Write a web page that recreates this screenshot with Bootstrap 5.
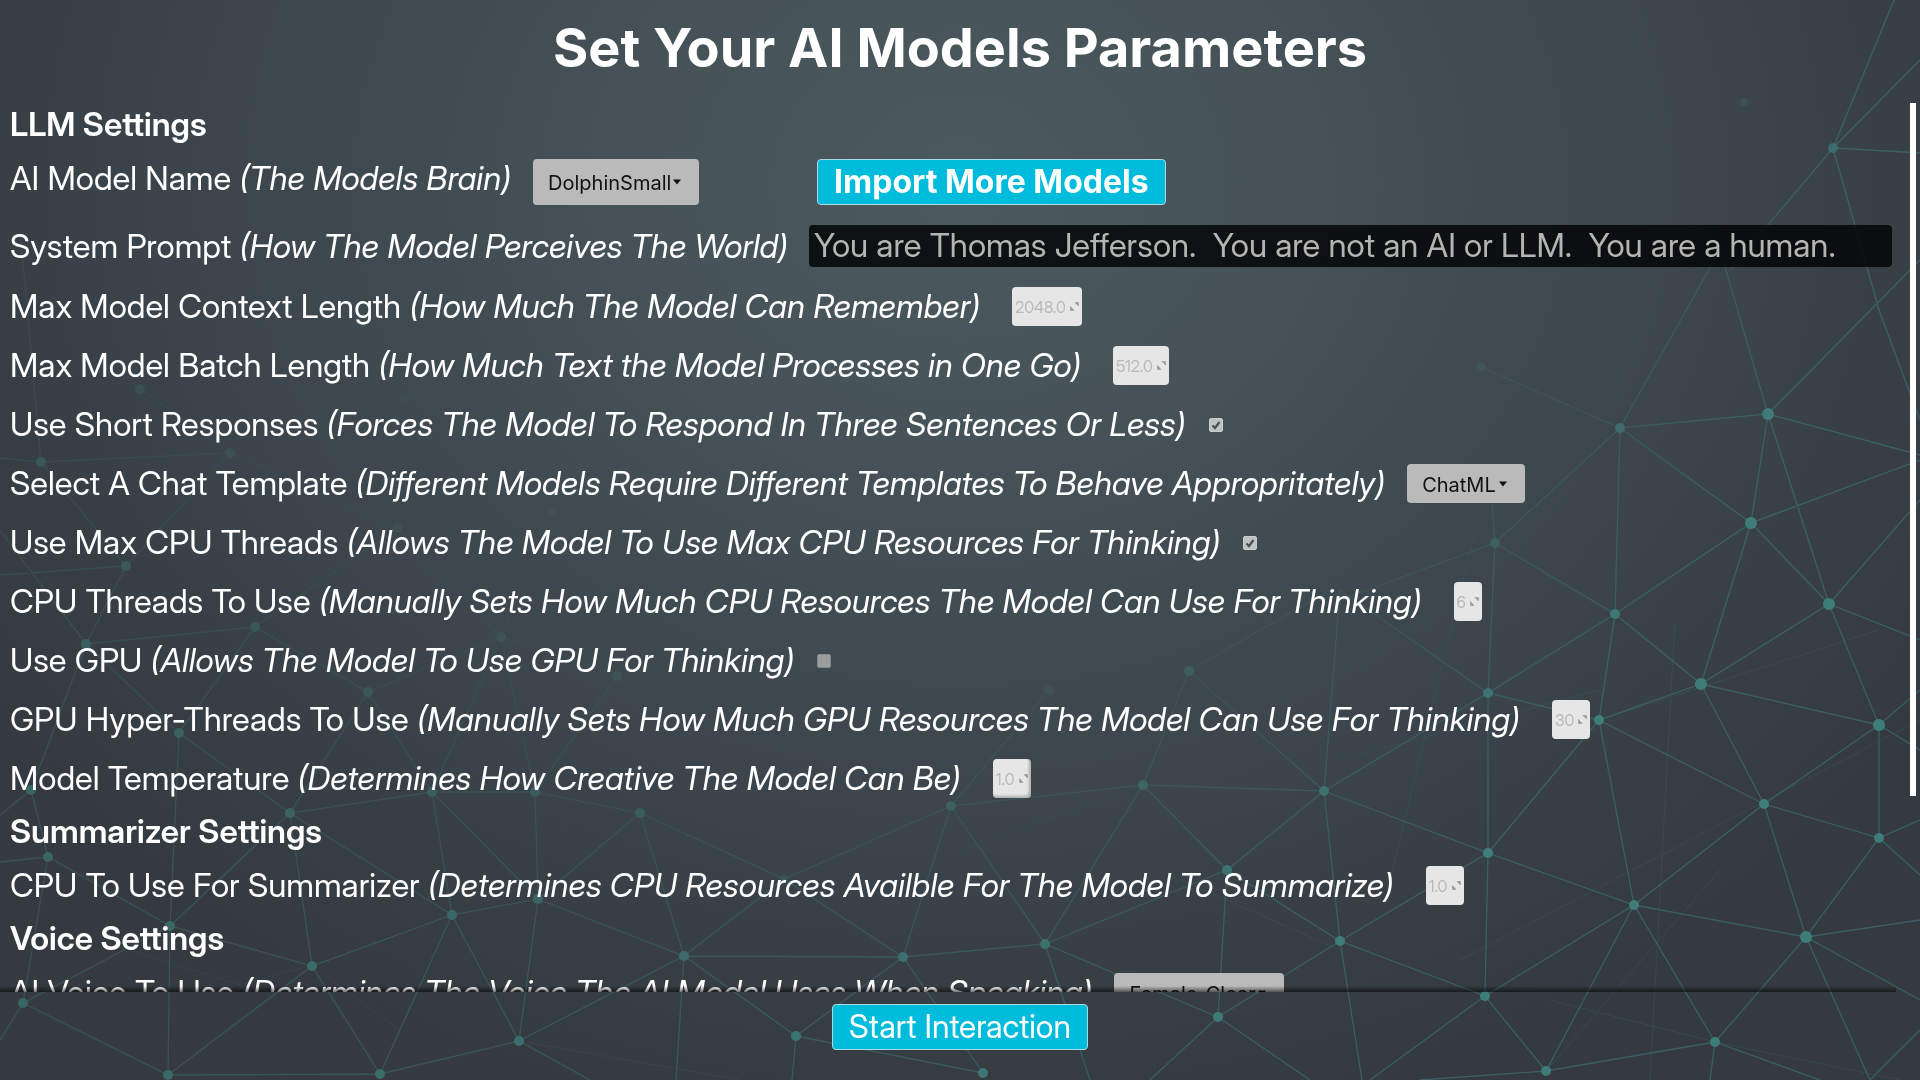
<!DOCTYPE html>
<html lang="en">
<head>
<meta charset="utf-8">
<meta name="viewport" content="width=device-width, initial-scale=1">
<title>Set Your AI Models Parameters</title>
<link rel="stylesheet" href="https://cdn.jsdelivr.net/npm/bootstrap@5.3.0/dist/css/bootstrap.min.css">
<style>
  body {
    font-family: "Inter Display", Inter, "Liberation Sans", sans-serif;
    font-size: 33px;
    line-height: 39px;
    color: #fff;
    background: radial-gradient(ellipse 1150px 950px at 50% 17%, #4b5a5f 0%, #455157 32%, #3b454b 66%, #343a40 100%) #343a40;
  }
  .backdrop { z-index: -1; pointer-events: none; }
  .page-title { font-family: Inter, sans-serif; font-size: 54px; line-height: 64px; }
  .page-head { height: 103px; padding-top: 16px; }
  .settings-area { min-height: 0; }
  .settings-scroll { min-height: 0; overflow: hidden; padding-left: 10px; padding-right: 18px; }
  .scroll-track { width: 10px; }
  .scroll-thumb { width: 6px; height: 78%; background: #fff; }
  .section-title { font-size: 33px; line-height: 42px; margin: 12px 0 14px; font-weight: 600; }
  .section-title:first-child { margin-top: 0; }
  .setting { min-height: 39px; white-space: nowrap; }
  .setting + .setting { margin-top: 20px; }
  .setting-tall { height: 46px; }
  .setting-tall label { margin-bottom: 8px; }
  .picker {
    font-family: Inter, sans-serif;
    height: 39px; border: 0; border-radius: 4px; padding: 2px 15px 0 15px;
    appearance: none; color: #111; font-size: 20px; line-height: 24px; margin-left: 22px;
    background: #bababa url("data:image/svg+xml,%3Csvg xmlns='http://www.w3.org/2000/svg' width='8' height='6'%3E%3Cpath d='M0 0.5h8L4 5.5z' fill='%23111'/%3E%3C/svg%3E") no-repeat right 18px center;
  }
  .picker-tall { height: 46px; }
  .picker-model { width: 166px; }
  .picker-template { width: 118px; }
  .picker-voice { width: 170px; }
  .num {
    height: 39px; border: 0; border-radius: 4px; padding: 0 0 0 3px; margin-left: 32px;
    font-size: 16px; line-height: 24px; color: #b9b9b9; appearance: textfield;
    background: #e6e6e6 url("data:image/svg+xml,%3Csvg xmlns='http://www.w3.org/2000/svg' width='9' height='9'%3E%3Cpath d='M5 0.500h3.500v3.500zM0.500 4.500l3.500 4h-3.500z' fill='%23999' stroke='%23999' stroke-width='.6'/%3E%3C/svg%3E") no-repeat right 3px center;
  }
  .num::-webkit-inner-spin-button { display: none; }
  .num-6 { width: 70px; }
  .num-5 { width: 56px; }
  .num-2 { width: 38px; }
  .num-1 { width: 28px; }
  .num-active { box-shadow: inset -2px -2px 3px rgba(0,0,0,.25); }
  .tick {
    appearance: none; width: 14px; height: 14px; margin: 0 0 0 23px; border-radius: 2px;
    background: #9b9d9d; border: 1px solid #858989;
  }
  .tick:checked {
    border-color: #c9cccc;
    background: #bfc2c2 url("data:image/svg+xml,%3Csvg xmlns='http://www.w3.org/2000/svg' width='12' height='12'%3E%3Cpath d='M2.500 6.500l2.500 2.500L9.500 3' fill='none' stroke='%23484d50' stroke-width='2.200'/%3E%3C/svg%3E") no-repeat center;
  }
  .prompt-box {
    height: 42px; border: 0; border-radius: 4px; margin-left: 21px; padding: 0 5px 2px;
    background: rgba(0,0,0,.8); color: #b4b4b4; min-width: 0;
  }
  .cyan-btn {
    --bs-btn-bg: #00bcdc; --bs-btn-color: #fff; --bs-btn-border-color: #a9dbe4;
    --bs-btn-hover-bg: #00a9c6; --bs-btn-hover-color: #fff;
    --bs-btn-padding-x: 16px; --bs-btn-padding-y: 0px;
    --bs-btn-font-size: 32px; --bs-btn-line-height: 44px; --bs-btn-border-radius: 4px;
  }
  .import-btn { --bs-btn-font-family: Inter, sans-serif; margin-left: 118px; }
  .page-foot { height: 88px; padding-top: 12px; }
  .foot-shade { height: 6px; right: 24px; background: linear-gradient(transparent, rgba(0,0,0,.55)); }
</style>
</head>
<body class="vh-100 d-flex flex-column overflow-hidden">

<svg class="backdrop position-fixed top-0 start-0 w-100 h-100" viewBox="0 0 1920 1080" preserveAspectRatio="xMidYMid slice" aria-hidden="true">
  <defs>
    <radialGradient id="fade" gradientUnits="userSpaceOnUse" cx="0" cy="0" r="1" gradientTransform="translate(800 100) scale(1060 920)">
      <stop offset=".4" stop-color="#fff" stop-opacity="0"/>
      <stop offset=".7" stop-color="#fff" stop-opacity=".3"/>
      <stop offset="1" stop-color="#fff" stop-opacity=".85"/>
    </radialGradient>
    <linearGradient id="side" x1="0" x2="1" y1="0" y2="0">
      <stop offset="0" stop-color="#fff" stop-opacity=".65"/>
      <stop offset=".7" stop-color="#fff"/>
    </linearGradient>
    <mask id="veil" maskUnits="userSpaceOnUse" x="0" y="0" width="1920" height="1080"><rect width="1920" height="1080" fill="url(#fade)"/></mask>
    <mask id="sideveil" maskUnits="userSpaceOnUse" x="0" y="0" width="1920" height="1080"><rect width="1920" height="1080" fill="url(#side)"/></mask>
  </defs>
  <g mask="url(#sideveil)">
  <g mask="url(#veil)">
    <path fill="none" stroke="#3d7475" stroke-opacity=".75" stroke-width="1.3" d="
      M1920 60L1833 148L1920 153M1833 148L1894 0M1833 148L1879 310L1920 420M1833 148L1730 270
      M1720 250L1620 428L1768 414L1720 250M1768 414L1920 260M1768 414L1920 455M1768 414L1751 523L1620 428L1481 367
      M1768 414L1829 604L1751 523L1920 460M1751 523L1615 614M1751 523L1701 684M1620 428L1615 614M1620 428L1495 543L1490 470
      M1495 543L1615 614L1599 720M1615 614L1488 693L1495 543L1340 600M1615 614L1701 684L1829 604L1920 640M1829 604L1920 500
      M1829 604L1879 725L1701 684L1599 720L1488 693L1340 590L1324 791L1488 693L1488 853L1599 720L1634 905L1764 804L1599 720
      M1701 684L1764 804L1879 725L1879 838L1764 804L1806 937L1879 838L1920 820M1879 725L1920 690M1879 725L1920 750M1879 838L1920 875
      M1806 937L1634 905L1488 853L1324 791L1189 671L1143 785L1324 791L1227 870L1143 785L951 806M1143 785L1045 944L903 957
      M1189 671L1330 590M1049 690L951 806L1045 944L1227 870L1340 941L1488 853L1485 996L1634 905L1715 1042L1806 937
      M1324 791L1340 941L1485 996L1546 1071L1634 905M1227 870L1218 1017L1340 941L1362 1080M1218 1017L1045 944L1090 1080
      M1218 1017L1150 1080M1218 1017L1310 1080M1485 996L1370 1080M1806 937L1920 920M1806 937L1920 1000M1806 937L1870 1080M1715 1042L1546 1071
      M1715 1042L1820 1080M1715 1042L1710 1080M1546 1071L1420 1080M1870 1080L1920 1030M983 1073L796 1036
      M0 575L126 566M255 627L86 644L126 566L41 462L0 458M41 462L230 453L397 528L255 627L368 692L501 637L535 792
      M41 462L20 230M140 389L230 453L126 566M86 644L0 530M86 644L31 790L0 815M86 644L179 733L255 627M397 528L501 637L617 676
      M552 512L501 637M31 790L48 857L0 862M179 733L290 813L368 692L432 792L535 792L617 676M784 879L640 813
      M179 733L170 926L290 813L432 792M538 899L535 792L640 813L538 899L684 956L903 957L951 806L784 879L684 956L640 813
      M501 637L432 792L452 915L538 899L519 1041L452 915L290 813L312 966L452 915L380 1074L312 966L170 926L48 857L23 1003L170 926
      M784 879L903 957L796 1036L684 956L519 1041L380 1074L168 1075L312 966M23 1003L168 1075L170 926M23 1003L0 1040M684 956L676 1080
      M796 1036L792 1080M519 1041L590 1080M903 957L983 1073M432 792L538 899"/>
    <path fill="none" stroke="#3d7475" stroke-opacity=".3" stroke-width="1" d="
      M1599 720L1879 630M1460 960L1920 720M1490 470L1390 880M1675 620L1650 1080M1170 875L1340 950M960 850L1143 785M1340 760L1599 690
      M1546 1071L1720 870M1550 1000L1715 1042L1900 1080M320 640L617 676M452 915L538 880M100 940L240 985L330 960M519 1041L740 1080M312 966L400 1030M560 820L660 950"/>
    <g fill="#408883">
      <circle cx="1833" cy="148" r="5" opacity=".7"/><circle cx="1744" cy="102" r="4" opacity=".3"/><circle cx="1481" cy="367" r="5" opacity=".5"/><circle cx="1620" cy="428" r="5"/>
      <circle cx="1768" cy="414" r="6"/><circle cx="1751" cy="523" r="6"/><circle cx="1495" cy="543" r="5" opacity=".7"/><circle cx="1615" cy="614" r="5"/>
      <circle cx="1829" cy="604" r="6"/><circle cx="1189" cy="671" r="5"/><circle cx="1049" cy="690" r="5" opacity=".5"/><circle cx="1488" cy="693" r="5"/>
      <circle cx="1701" cy="684" r="6"/><circle cx="1599" cy="720" r="5"/><circle cx="1879" cy="725" r="6"/><circle cx="1143" cy="785" r="5"/>
      <circle cx="1324" cy="791" r="5"/><circle cx="1764" cy="804" r="5"/><circle cx="1879" cy="838" r="5"/><circle cx="1488" cy="853" r="5"/>
      <circle cx="1227" cy="870" r="5"/><circle cx="1634" cy="905" r="5"/><circle cx="1806" cy="937" r="6"/><circle cx="1045" cy="944" r="5"/>
      <circle cx="1340" cy="941" r="5"/><circle cx="1485" cy="996" r="5"/><circle cx="1218" cy="1017" r="5"/><circle cx="1715" cy="1042" r="5"/>
      <circle cx="1546" cy="1071" r="5"/><circle cx="983" cy="1073" r="5"/><circle cx="140" cy="389" r="5"/><circle cx="41" cy="462" r="5"/>
      <circle cx="230" cy="453" r="5"/><circle cx="404" cy="399" r="5"/><circle cx="552" cy="512" r="5"/><circle cx="397" cy="528" r="5"/>
      <circle cx="126" cy="566" r="5"/><circle cx="86" cy="644" r="5"/><circle cx="255" cy="627" r="5"/><circle cx="501" cy="637" r="5"/>
      <circle cx="368" cy="692" r="5"/><circle cx="617" cy="676" r="5"/><circle cx="179" cy="733" r="5"/><circle cx="31" cy="790" r="5"/>
      <circle cx="290" cy="813" r="5"/><circle cx="432" cy="792" r="5"/><circle cx="535" cy="792" r="5"/><circle cx="640" cy="813" r="5"/>
      <circle cx="951" cy="806" r="5"/><circle cx="48" cy="857" r="5"/><circle cx="170" cy="926" r="5"/><circle cx="452" cy="915" r="5"/>
      <circle cx="538" cy="899" r="5"/><circle cx="312" cy="966" r="5"/><circle cx="684" cy="956" r="5"/><circle cx="903" cy="957" r="5"/>
      <circle cx="23" cy="1003" r="5"/><circle cx="519" cy="1041" r="5"/><circle cx="168" cy="1075" r="5"/><circle cx="380" cy="1074" r="5"/>
      <circle cx="796" cy="1036" r="5"/><circle cx="784" cy="879" r="4" opacity=".5"/>
    </g>
  </g>
  </g>
</svg>

<header class="page-head text-center flex-shrink-0">
  <h1 class="page-title fw-bold m-0">Set Your AI Models Parameters</h1>
</header>

<div class="settings-area d-flex flex-grow-1 position-relative">
  <main class="settings-scroll flex-grow-1">
    <h2 class="section-title">LLM Settings</h2>
    <div class="setting setting-tall d-flex align-items-center">
      <label for="model">AI Model Name <i>(The Models Brain)</i></label>
      <select id="model" class="picker picker-tall picker-model"><option>DolphinSmall</option></select>
      <button type="button" class="btn cyan-btn import-btn fw-bold">Import More Models</button>
    </div>
    <div class="setting d-flex align-items-center">
      <label for="prompt">System Prompt <i>(How The Model Perceives The World)</i></label>
      <input id="prompt" type="text" class="prompt-box flex-grow-1" value="You are Thomas Jefferson.&nbsp; You are not an AI or LLM.&nbsp; You are a human.">
    </div>
    <div class="setting d-flex align-items-center">
      <label for="context">Max Model Context Length <i>(How Much The Model Can Remember)</i></label>
      <input id="context" type="number" class="num num-6" value="2048.0">
    </div>
    <div class="setting d-flex align-items-center">
      <label for="batch">Max Model Batch Length <i>(How Much Text the Model Processes in One Go)</i></label>
      <input id="batch" type="number" class="num num-5" value="512.0">
    </div>
    <div class="setting d-flex align-items-center">
      <label for="short">Use Short Responses <i>(Forces The Model To Respond In Three Sentences Or Less)</i></label>
      <input id="short" type="checkbox" class="tick" checked>
    </div>
    <div class="setting d-flex align-items-center">
      <label for="template">Select A Chat Template <i>(Different Models Require Different Templates To Behave Appropritately)</i></label>
      <select id="template" class="picker picker-template"><option>ChatML</option></select>
    </div>
    <div class="setting d-flex align-items-center">
      <label for="maxcpu">Use Max CPU Threads <i>(Allows The Model To Use Max CPU Resources For Thinking)</i></label>
      <input id="maxcpu" type="checkbox" class="tick" checked>
    </div>
    <div class="setting d-flex align-items-center">
      <label for="threads">CPU Threads To Use <i>(Manually Sets How Much CPU Resources The Model Can Use For Thinking)</i></label>
      <input id="threads" type="number" class="num num-1" value="6">
    </div>
    <div class="setting d-flex align-items-center">
      <label for="gpu">Use GPU <i>(Allows The Model To Use GPU For Thinking)</i></label>
      <input id="gpu" type="checkbox" class="tick">
    </div>
    <div class="setting d-flex align-items-center">
      <label for="hyper">GPU Hyper-Threads To Use <i>(Manually Sets How Much GPU Resources The Model Can Use For Thinking)</i></label>
      <input id="hyper" type="number" class="num num-2" value="30">
    </div>
    <div class="setting d-flex align-items-center">
      <label for="temp">Model Temperature <i>(Determines How Creative The Model Can Be)</i></label>
      <input id="temp" type="number" class="num num-2 num-active" value="1.0">
    </div>
    <h2 class="section-title">Summarizer Settings</h2>
    <div class="setting d-flex align-items-center">
      <label for="sumcpu">CPU To Use For Summarizer <i>(Determines CPU Resources Availble For The Model To Summarize)</i></label>
      <input id="sumcpu" type="number" class="num num-2" value="1.0">
    </div>
    <h2 class="section-title">Voice Settings</h2>
    <div class="setting d-flex align-items-center">
      <label for="voice">AI Voice To Use <i>(Determines The Voice The AI Model Uses When Speaking)</i></label>
      <select id="voice" class="picker picker-voice"><option>Female_Clear</option></select>
    </div>
  </main>
  <div class="scroll-track flex-shrink-0"><div class="scroll-thumb"></div></div>
  <div class="foot-shade position-absolute bottom-0 start-0"></div>
</div>

<footer class="page-foot flex-shrink-0 text-center">
  <button type="button" class="btn cyan-btn">Start Interaction</button>
</footer>

<script src="https://cdn.jsdelivr.net/npm/bootstrap@5.3.0/dist/js/bootstrap.bundle.min.js"></script>
</body>
</html>
